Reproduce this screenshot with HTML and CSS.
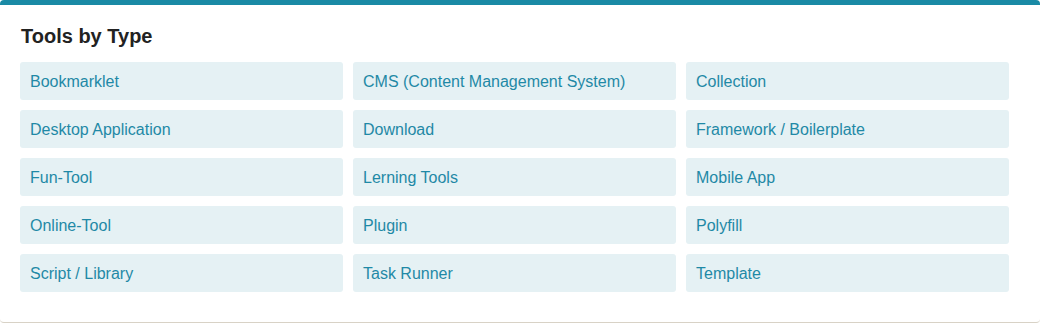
FILE: index.html
```html
<!DOCTYPE html>
<html>
 <head>
  <meta charset="utf-8">
  <title>Tools by Type</title>
  <meta name="viewport" content="width=device-width, initial-scale=1.0">
<link rel="stylesheet" href="styles.css">
 </head>

<body>

<section class="type-box">
  <h3>Tools by Type</h3>

  <div class="type-list">
    <a class="type-item" href="#">Bookmarklet</a>
    <a class="type-item" href="#">CMS (Content Management System)</a>
    <a class="type-item" href="#">Collection</a>
    <a class="type-item" href="#">Desktop Application</a>
    <a class="type-item" href="#">Download</a>
    <a class="type-item" href="#">Framework / Boilerplate</a>
    <a class="type-item" href="#">Fun-Tool</a>
    <a class="type-item" href="#">Lerning Tools</a>
    <a class="type-item" href="#">Mobile App</a>
    <a class="type-item" href="#">Online-Tool</a>
    <a class="type-item" href="#">Plugin</a>
    <a class="type-item" href="#">Polyfill</a>
    <a class="type-item" href="#">Script / Library</a>
    <a class="type-item" href="#">Task Runner</a>
    <a class="type-item" href="#">Template</a>
  </div>
</section>

</body>
</html>
```

FILE: styles.css
```css
* {
  box-sizing: border-box;
}

body {
  margin: 0;
  background: #ffffff;
  font-family: "Liberation Sans", Arial, Helvetica, sans-serif;
}

/* the white card with the teal top bar */
.type-box {
  width: 1040px;
  height: 323px;
  padding: 19px 31px 0 20px;
  background: #ffffff;
  border-top: 5px solid #1a8aa5;
  border-bottom: 1px solid #d8d2c6;
  border-radius: 4px;
}

.type-box h3 {
  margin: 0 0 14px 1px;
  font-size: 20px;
  line-height: 24px;
  font-weight: bold;
  color: #222222;
}

.type-list {
  display: grid;
  grid-template-columns: repeat(3, 1fr);
  gap: 10px;
}

.type-item {
  display: block;
  padding: 10px 10px 8px;
  font-size: 16px;
  line-height: 20px;
  color: #1f89a6;
  text-decoration: none;
  background: #e5f1f4;
  border-radius: 3px;
}
```
